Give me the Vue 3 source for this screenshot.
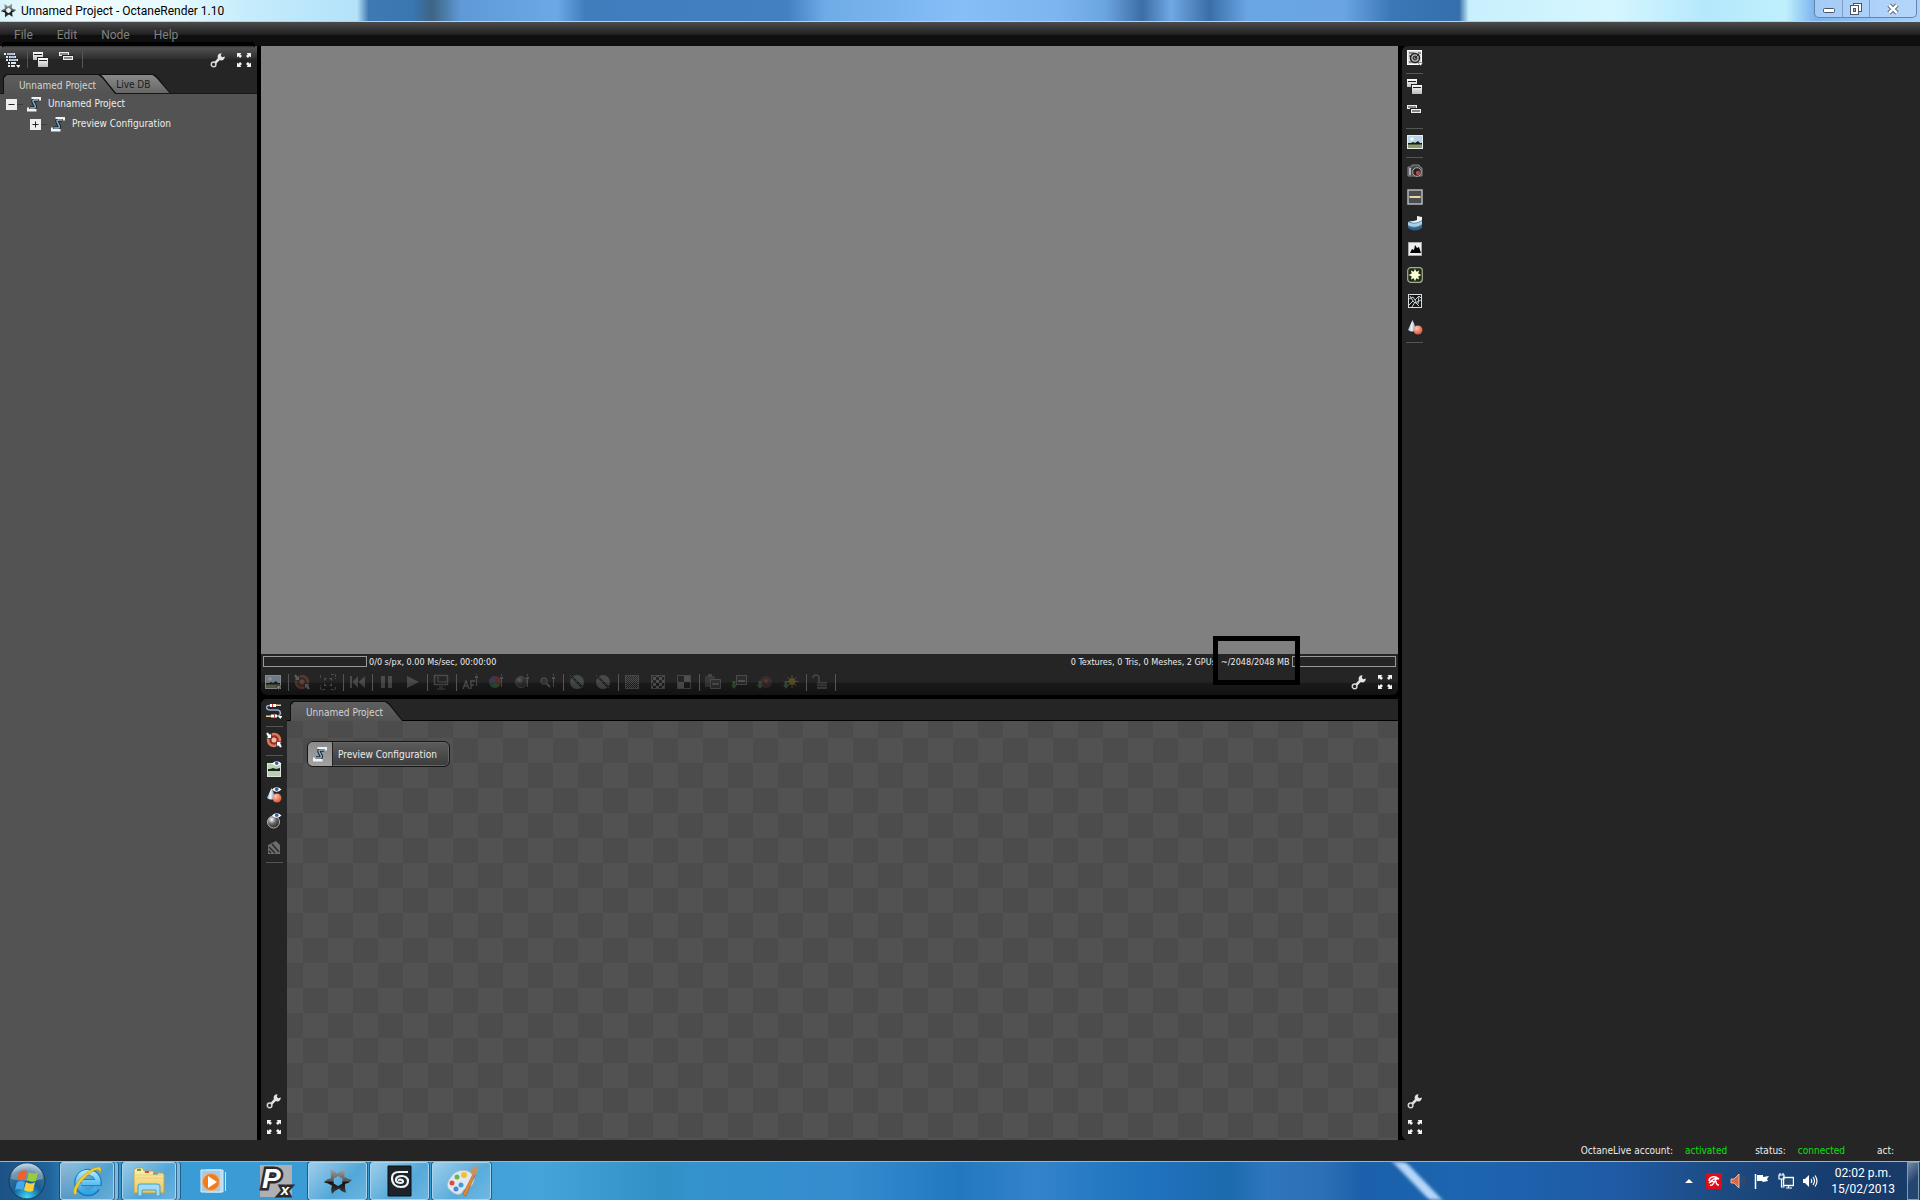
<script setup>
import { ref } from 'vue';

const menus = ['File', 'Edit', 'Node', 'Help'];

const treeTools = ['outline', '|', 'expand-items', 'collapse-items', '|'];

const renderTools = [
  'save-image', '|', 'recenter', 'fit', '|', 'restart', '|', 'pause', 'play', '|',
  'resolution', '|', 'autofocus', 'pick-white', 'pick-material', 'zoom-pick', '|',
  'sphere-a', 'sphere-b', '|', 'checks-fine', 'checks-mid', 'checks-large', '|',
  'clipboard', 'save-region', 'save-material', 'save-light', '|', 'lock', '|',
];

const graphTools = [
  'cable', '|', 'recenter', '|', 'image-eye', 'shapes-eye', 'sphere-eye', 'hatch', '|',
];

const inspectorTools = [
  'dial', '|', 'expand-items', 'collapse-items', '|', 'image', '|', 'camera', 'film',
  'environment', 'histogram', 'kernel', 'mesh', 'shapes', '|',
];

const windowTools = ['wrench', 'fullscreen'];

const tasks = [
  { id: 'ie', label: 'Internet Explorer', open: true, stacked: true },
  { id: 'explorer', label: 'Explorer', open: true, stacked: true },
  { id: 'wmp', label: 'Media Player' },
  { id: 'px', label: 'Px' },
  { id: 'octane', label: 'OctaneRender', open: true },
  { id: 'max', label: '3ds Max', open: true },
  { id: 'paint', label: 'Paint', open: true },
];

const tray = ['avira', 'speaker-red', 'flag', 'network', 'volume'];

const tab = ref('project');
const expanded = ref(true);
</script>

<template>
  <div class="desktop">
    <svg class="sprite" aria-hidden="true">
      <defs>
        <linearGradient id="silver" x1="0" y1="0" x2="0" y2="1">
          <stop offset="0" stop-color="#fff" />
          <stop offset="1" stop-color="#bbb" />
        </linearGradient>
        <linearGradient id="blade" x1="0" y1="0" x2="0" y2="1">
          <stop offset="0" stop-color="#b4b4b4" />
          <stop offset=".5" stop-color="#555" />
          <stop offset=".55" stop-color="#111" />
          <stop offset="1" stop-color="#444" />
        </linearGradient>
        <path id="wing" d="M14 9l4.300 2.500L20 9q1.500-3 0-8-3 4-8.500 6z" />
        <clipPath id="wings">
          <use href="#wing" />
          <use href="#wing" transform="rotate(60 14 14)" />
          <use href="#wing" transform="rotate(120 14 14)" />
          <use href="#wing" transform="rotate(180 14 14)" />
          <use href="#wing" transform="rotate(240 14 14)" />
          <use href="#wing" transform="rotate(300 14 14)" />
        </clipPath>
        <radialGradient id="ball" cx=".35" cy=".3" r=".8">
          <stop offset="0" stop-color="#fff" />
          <stop offset=".45" stop-color="#666" />
          <stop offset="1" stop-color="#1c1c1c" />
        </radialGradient>
        <radialGradient id="red-ball" cx=".35" cy=".3" r=".8">
          <stop offset="0" stop-color="#ffc8b0" />
          <stop offset="1" stop-color="#d8452a" />
        </radialGradient>
        <linearGradient id="cone" x1="0" y1="0" x2="1" y2="0">
          <stop offset="0" stop-color="#8fb4c8" />
          <stop offset=".4" stop-color="#eef6fa" />
          <stop offset="1" stop-color="#55707f" />
        </linearGradient>
        <radialGradient id="orb" cx=".5" cy=".95" r=".9">
          <stop offset="0" stop-color="#3fd8ff" />
          <stop offset=".45" stop-color="#155f94" />
          <stop offset=".8" stop-color="#3c6f94" />
          <stop offset="1" stop-color="#9dc0d4" />
        </radialGradient>
        <linearGradient id="ie-blue" x1="0" y1="0" x2="0" y2="1">
          <stop offset="0" stop-color="#a4e6ff" />
          <stop offset="1" stop-color="#2fa6e8" />
        </linearGradient>
        <linearGradient id="folder" x1="0" y1="0" x2="0" y2="1">
          <stop offset="0" stop-color="#fff0b0" />
          <stop offset="1" stop-color="#e8c860" />
        </linearGradient>
      </defs>

      <symbol id="outline" viewBox="0 0 16 16">
        <g fill="#dfe6f0">
          <path d="M0 1h2v2H0zM3 1h8v2H3zM2 4h2v2H2zM5 4h7v2H5zM2 7h2v2H2zM5 7h9v2H5zM4 10h2v2H4zM7 10h5v2H7zM4 13h2v2H4zM7 13h4v2H7z" />
        </g>
        <path d="M3 2h7M6 5h5M6 8h7" stroke="#7d95b8" stroke-width="1" />
        <path d="M12 13h4.500l-2.250 3z" fill="#fff" />
      </symbol>
      <symbol id="expand-items" viewBox="0 0 16 16">
        <rect x="0" y="0" width="10" height="8" fill="url(#silver)" />
        <path d="M1 2.500h8" stroke="#222" />
        <rect x="4" y="5" width="11" height="10" fill="#222" />
        <rect x="5" y="6" width="10" height="9" fill="url(#silver)" />
        <path d="M6 8.500h8" stroke="#222" />
      </symbol>
      <symbol id="collapse-items" viewBox="0 0 16 16">
        <rect x="0" y="0" width="10" height="4" fill="#eee" />
        <path d="M1 2h8" stroke="#222" />
        <rect x="3" y="3" width="11" height="5" fill="#222" />
        <rect x="4" y="4" width="10" height="4" fill="#eee" />
        <path d="M5 6h8" stroke="#222" />
      </symbol>
      <symbol id="wrench" viewBox="0 0 16 16">
        <path d="M5.200 10.800L10.500 5.500" stroke="#e4e4e4" stroke-width="2.600" />
        <path d="M14.800 4.500A3.600 3.600 0 1 1 11.500 1.200L10.800 3.800 12.200 5.200z" fill="#e4e4e4" />
        <circle cx="3.600" cy="12.400" r="2.300" fill="none" stroke="#d4d4d4" stroke-width="1.500" />
      </symbol>
      <symbol id="fullscreen" viewBox="0 0 16 16">
        <path
          fill="#f2f2f2"
          d="M1 1h4.500L4.200 2.300 6 4.100 4.100 6 2.300 4.200 1 5.500zM15 1v4.500l-1.300-1.300L11.900 6 10 4.100l1.800-1.800L10.500 1zM1 15v-4.500l1.300 1.300L4.100 10 6 11.900l-1.800 1.800L5.500 15zM15 15h-4.500l1.300-1.300L10 11.900l1.900-1.900 1.800 1.800 1.300-1.300z" />
      </symbol>
      <symbol id="node" viewBox="0 0 16 16">
        <path d="M12 4H8.500Q6 4 7.500 6.500l1.500 3Q10 12 8 12H4" fill="none" stroke="#1c2a34" stroke-width="3.600" />
        <path d="M12 4H8.500Q6 4 7.500 6.500l1.500 3Q10 12 8 12H4" fill="none" stroke="#8fb4c8" stroke-width="1.400" />
        <path d="M5.500 1H15v3.500h-2V3H5.500zM1 11.500h2V13h7.500v2.500H1z" fill="#f2f2f2" />
      </symbol>
      <symbol id="image" viewBox="0 0 16 16">
        <rect x=".5" y="1.500" width="15" height="13" fill="#b9d3e8" stroke="#e8ecef" />
        <path d="M1 9.500h14V14H1z" fill="#8c9a68" />
        <path d="M1 9h3l2-1 2 1 3-2 2 2h2v1.500H1z" fill="#162018" />
        <circle cx="5" cy="5" r="1.800" fill="#ffffe0" />
      </symbol>
      <symbol id="save-image" viewBox="0 0 16 16">
        <use href="#image" />
        <path d="M11 12h5l-2.500 4z" fill="#fff" stroke="#222" stroke-width=".5" />
      </symbol>
      <symbol id="recenter" viewBox="0 0 16 16">
        <circle cx="8" cy="8" r="6" fill="#8c3424" stroke="#e6745c" stroke-width="2.500" />
        <circle cx="8" cy="8" r="2.500" fill="#f4b4a4" />
        <path d="M0 1.500L1.500 0 4 2.500 5.500 1v5.500H0L1.500 5zM16 14.500L14.500 16 12 13.500 10.500 15V9.500H16L14.500 11z" fill="#fff" stroke="#222" stroke-width=".7" />
      </symbol>
      <symbol id="fit" viewBox="0 0 16 16">
        <path d="M11 .500h4.500V5M5 15.500H.500V11M11 15.500h4.500V12M.500 4V1" fill="none" stroke="#bbb" stroke-dasharray="3 1" />
        <path d="M4 4h3L4 7zM12 4v3L9 4zM4 12V9l3 3zM12 12H9l3-3z" fill="#ccc" />
      </symbol>
      <symbol id="restart" viewBox="0 0 16 16">
        <path d="M1 2h2v12H1zM9 2v12L3.500 8zM16 2v12L9.500 8z" fill="#bbb" />
      </symbol>
      <symbol id="pause" viewBox="0 0 16 16">
        <path d="M3 2h4v12H3zM10 2h4v12h-4z" fill="#bbb" />
      </symbol>
      <symbol id="play" viewBox="0 0 16 16">
        <path d="M3 2l12 6-12 6z" fill="#bbb" />
      </symbol>
      <symbol id="resolution" viewBox="0 0 16 16">
        <rect x="1.500" y="1.500" width="13" height="9" fill="none" stroke="#bbb" stroke-width="1.500" />
        <path d="M5 3v5h8M4 4l1-1 1 1M12 7l1 1-1 1M6 13h4M4 15h8" fill="none" stroke="#bbb" />
      </symbol>
      <symbol id="picker" viewBox="0 0 16 16">
        <path d="M12 3h3v2h-1v8h-1V5h-1zM13 0h1v2h-1z" fill="#ccc" />
      </symbol>
      <symbol id="autofocus" viewBox="0 0 16 16">
        <path d="M1 15l3-8 3 8M2 12h4M9 15V7h4M9 11h3" fill="none" stroke="#ccc" stroke-width="1.400" />
        <use href="#picker" x="1" y="-1" />
      </symbol>
      <symbol id="pick-white" viewBox="0 0 16 16">
        <path d="M7 8V2a6 6 0 0 0-5.200 9z" fill="#5a8ae0" />
        <path d="M7 8l-5.200 3A6 6 0 0 0 12.200 11z" fill="#50c060" />
        <path d="M7 8l5.200 3A6 6 0 0 0 7 2z" fill="#e05040" />
        <path d="M7 8V2a6 6 0 0 0-4 1.500z" fill="#c050c0" />
        <use href="#picker" />
      </symbol>
      <symbol id="pick-material" viewBox="0 0 16 16">
        <circle cx="7" cy="8" r="5.500" fill="url(#ball)" stroke="#aaa" />
        <use href="#picker" />
      </symbol>
      <symbol id="zoom-pick" viewBox="0 0 16 16">
        <circle cx="4" cy="7" r="3.200" fill="#666" stroke="#ccc" />
        <path d="M6.500 9.500L10 13" stroke="#ccc" stroke-width="2" />
        <use href="#picker" />
      </symbol>
      <symbol id="sphere-a" viewBox="0 0 16 16">
        <circle cx="8" cy="8" r="7" fill="#a4b8c4" />
        <path d="M1 1l14 14" stroke="#111" stroke-width="2" />
        <path d="M1 1l14 14" stroke="#ccc" stroke-dasharray="2 2" />
      </symbol>
      <symbol id="sphere-b" viewBox="0 0 16 16">
        <circle cx="8" cy="8" r="7" fill="#b4b4b4" />
        <path d="M1 1l14 14" stroke="#111" stroke-width="2" />
        <path d="M1 1l14 14" stroke="#ccc" stroke-dasharray="2 2" />
      </symbol>
      <pattern id="fine" width="2" height="2" patternUnits="userSpaceOnUse">
        <path d="M0 0h1v1H0zM1 1h1v1H1z" fill="#ccc" />
      </pattern>
      <pattern id="mid" width="6" height="6" patternUnits="userSpaceOnUse">
        <path d="M0 0h3v3H0zM3 3h3v3H3z" fill="#ccc" />
      </pattern>
      <symbol id="checks-fine" viewBox="0 0 16 16">
        <rect x="1.500" y="1.500" width="13" height="13" fill="url(#fine)" stroke="#aaa" />
      </symbol>
      <symbol id="checks-mid" viewBox="0 0 16 16">
        <rect x="1.500" y="1.500" width="13" height="13" fill="url(#mid)" stroke="#aaa" />
      </symbol>
      <symbol id="checks-large" viewBox="0 0 16 16">
        <rect x="1.500" y="1.500" width="13" height="13" fill="none" stroke="#aaa" />
        <path d="M8 2h6v6H8zM2 8h6v6H2z" fill="#ccc" />
      </symbol>
      <symbol id="clipboard" viewBox="0 0 16 16">
        <path d="M0 2h10v11H0z" fill="#777" />
        <path d="M3 0h4v3H3z" fill="#aaa" />
        <path d="M5.500 5.500h10v9h-10z" fill="#555" stroke="#bbb" />
        <path d="M7 10h7" stroke="#ccc" stroke-width="2" />
      </symbol>
      <symbol id="arrow-down" viewBox="0 0 16 16">
        <path d="M1.500 7h3v4H6l-3 4-3-4h1.500z" fill="#6fc86f" />
      </symbol>
      <symbol id="save-region" viewBox="0 0 16 16">
        <rect x="5.500" y="1.500" width="10" height="9" fill="#444" stroke="#bbb" />
        <path d="M7 7h7" stroke="#ccc" stroke-width="2" />
        <use href="#arrow-down" />
      </symbol>
      <symbol id="save-material" viewBox="0 0 16 16">
        <circle cx="9" cy="8" r="5" fill="#a03525" stroke="#556" stroke-width="2" />
        <circle cx="9" cy="7" r="2" fill="#d08060" />
        <use href="#arrow-down" />
      </symbol>
      <symbol id="save-light" viewBox="0 0 16 16">
        <path d="M9 1v13M2.500 7.500h13M4.500 3l9 9M13.500 3l-9 9" stroke="#d8c030" />
        <circle cx="9" cy="7.500" r="3.500" fill="#e8c838" />
        <use href="#arrow-down" />
      </symbol>
      <symbol id="lock" viewBox="0 0 16 16">
        <path d="M1 4c0-4 6-4 6 0v4" fill="none" stroke="#aaa" stroke-width="1.500" />
        <path d="M5 8h10v7H5z" fill="#999" />
        <path d="M5 10h10M5 12.500h10" stroke="#444" />
      </symbol>

      <symbol id="cable" viewBox="0 0 16 16">
        <path d="M5 2.500H3C-1 2.500 0 7 4 7h7c4 0 5 6 0 6" fill="none" stroke="#8fa9c8" stroke-width="1.600" />
        <path d="M4 1h6v3H4zM5 11.500h6v3H5z" fill="#fff" />
        <path d="M6 1h1v3H6zM8 11.500h1v3H8z" fill="#d33" />
        <path d="M10 1.500h5V3h-5zM0 12.500h5V14H0z" fill="#f1d49a" />
        <path d="M12 13h4.500l-2.250 3z" fill="#fff" />
      </symbol>
      <symbol id="eye" viewBox="0 0 16 16">
        <path d="M6 2.500q4.500-4.500 9.500 0-5 4.500-9.500 0z" fill="#fff" />
        <circle cx="10.700" cy="2.300" r="1.800" fill="#2f62a8" />
      </symbol>
      <symbol id="image-eye" viewBox="0 0 16 16">
        <rect x="1.500" y="2.500" width="13" height="13" fill="#b9d0b4" stroke="#dde5dd" />
        <path d="M2 8h2l3-1 3 1 4-1v3H2z" fill="#1b2418" />
        <use href="#eye" />
      </symbol>
      <symbol id="shapes" viewBox="0 0 16 16">
        <path d="M5.500 1l4.500 10q-5 3-9 0z" fill="url(#cone)" />
        <circle cx="11" cy="11" r="4.500" fill="url(#red-ball)" />
      </symbol>
      <symbol id="shapes-eye" viewBox="0 0 16 16">
        <use href="#shapes" />
        <use href="#eye" />
      </symbol>
      <symbol id="sphere-eye" viewBox="0 0 16 16">
        <circle cx="7.500" cy="9" r="6" fill="url(#ball)" stroke="#b4b4b4" />
        <use href="#eye" />
      </symbol>
      <symbol id="hatch" viewBox="0 0 16 16">
        <path d="M2 6l8-4 4 4v9H2z" fill="#6b6e70" />
        <path d="M3 8l6 6M3 12l2 2M6 5l7 8" stroke="#25282a" stroke-width="1.400" />
      </symbol>

      <symbol id="dial" viewBox="0 0 16 16">
        <rect x=".5" y=".5" width="14" height="14" fill="#ddd" stroke="#fff" />
        <path d="M2 3h3M2 6h2M2 12h3M11 3h3M6 2v2" stroke="#333" />
        <circle cx="8" cy="8" r="4.500" fill="#bbb" stroke="#222" stroke-width="1.500" />
        <circle cx="8" cy="8" r="2" fill="#777" stroke="#222" />
        <path d="M8 8l4-4" stroke="#222" />
        <path d="M11 12.500h5l-2.500 3.500z" fill="#fff" stroke="#222" stroke-width=".5" />
      </symbol>
      <symbol id="camera" viewBox="0 0 16 16">
        <path d="M1 4h3l1-2h7l1 2 2 1v8H1z" fill="#4b4b4b" stroke="#8a8a8a" />
        <path d="M2 5h2v7H2z" fill="#b0b0b0" />
        <circle cx="10" cy="9" r="4.300" fill="#222" stroke="#aaa" />
        <circle cx="11" cy="10" r="2.200" fill="#b54848" />
      </symbol>
      <symbol id="film" viewBox="0 0 16 16">
        <rect x="1" y="1" width="14" height="14" fill="#4a4d4f" stroke="#b4b9bc" stroke-width="1.500" />
        <path d="M2.500 8h11" stroke="#ecd89a" stroke-width="2" />
      </symbol>
      <symbol id="environment" viewBox="0 0 16 16">
        <path d="M1 7v5q7 5 14 0V4l-4-2v3Q6 8 1 7z" fill="#5b93ae" />
        <path d="M1 6q7 4 14-1V2l-5-1v4Q5 7 1 6z" fill="#eaf4fa" />
        <path d="M1 7q7 4 14-1v3q-7 5-14 1z" fill="#a9d0e4" />
        <path d="M1 11q7 4 14-1v3q-7 5-14 0z" fill="#325f86" />
      </symbol>
      <symbol id="histogram" viewBox="0 0 16 16">
        <rect x="1.500" y="1.500" width="13" height="13" fill="#eee" stroke="#aaa" />
        <path d="M3 12l2-4 2 1 1-5 2 3 2-1 1 3 1 3z" fill="#000" />
      </symbol>
      <symbol id="kernel" viewBox="0 0 16 16">
        <rect x=".7" y=".7" width="14.600" height="14.600" rx="3" fill="#202c14" stroke="#a8ae9c" stroke-width="1.200" />
        <path d="M8 1.800l1.300 3 2.900-1.400-1 3.100 3.200 1.500-3.200 1.500 1 3.100-2.900-1.400L8 14.200l-1.300-3-2.900 1.400 1-3.100L1.600 8l3.200-1.500-1-3.100 2.900 1.400z" fill="#f8ffd8" />
      </symbol>
      <symbol id="mesh" viewBox="0 0 16 16">
        <rect x="1.500" y="1.500" width="13" height="13" fill="#161616" stroke="#ddd" />
        <path d="M2 6l4-2 2 3 4-4 2 2M2 12l4-4 2 2 6-3M5 14l3-5 4 4M8 7l1 2M3 3l3 5M12 3l-1 8" fill="none" stroke="#c4ccd0" />
      </symbol>

      <symbol id="octane" viewBox="0 0 28 28">
        <rect width="28" height="28" fill="url(#blade)" clip-path="url(#wings)" />
      </symbol>
      <symbol id="ie" viewBox="0 0 32 32">
        <path d="M26 23a10.500 10.500 0 1 1 1.500-5.500H11" fill="none" stroke="#1b76b8" stroke-width="6.500" />
        <path d="M25.500 22.500a10 10 0 1 1 1.500-5H11" fill="none" stroke="url(#ie-blue)" stroke-width="5" />
        <path d="M4 30C-3 24 18 1 28 2c3 0 2 4 1 6 0-4-4-5-11 1C8 17 4 26 6 28z" fill="#f5cf2e" stroke="#c89010" stroke-width=".6" />
      </symbol>
      <symbol id="explorer" viewBox="0 0 32 32">
        <path d="M1 5l2-2h7l1 3h9l1 2h9l1 2v18H1z" fill="url(#folder)" stroke="#bfa050" />
        <path d="M4 4h4v2H4z" fill="#3fae49" />
        <path d="M12 6h4v2h-4z" fill="#d84a3a" />
        <path d="M20 8h5v2h-5z" fill="#4e9fe0" />
        <path d="M1 13h30M1 10h30" stroke="#e4cf80" />
        <path d="M5 31V21q0-2 2-2h17q3 0 3 2v10h-4v-6H9v6z" fill="#9fdcf6" stroke="#4b9cc4" />
      </symbol>
      <symbol id="wmp" viewBox="0 0 32 32">
        <path d="M8 5h17v22H8z" fill="#8ec5e8" stroke="#cfe9f8" />
        <path d="M24 6h1v21h-1zM27 7h1v19h-1z" fill="#c8e6f6" />
        <path d="M3 5h20v22H3z" fill="#a6cbe6" stroke="#e0f0fa" />
        <circle cx="13" cy="17" r="8.500" fill="#f07c1c" stroke="#f8b070" />
        <path d="M10 11l9 6-9 6z" fill="#fff" />
      </symbol>
      <symbol id="max" viewBox="0 0 32 32">
        <path d="M4 1h23v30H4z" fill="#1d2429" stroke="#0a0e12" />
        <path d="M24 7h-9c-5 0-7 3-7 6 0 6 4 9 9 9s7-3 7-6-3-5-6-5-6 1-6 4 3 3 5 3 3-2 1-3-3 0-4 0" fill="none" stroke="#eef3f5" stroke-width="2.200" />
      </symbol>
      <symbol id="paint" viewBox="0 0 32 32">
        <path d="M5 12C10 4 20 4 25 8c5 5 3 10 0 13-3 4-7 2-8 5-2 5-8 4-12 0-6-4-4-9 0-14z" fill="#dfe8f2" stroke="#a8bccb" />
        <circle cx="15" cy="20" r="2.500" fill="#3f9fd0" />
        <circle cx="6" cy="18" r="2.500" fill="#e04a38" />
        <circle cx="11" cy="12" r="2.500" fill="#62b84e" />
        <circle cx="18" cy="10" r="3" fill="#f0c030" />
        <circle cx="10" cy="24" r="2.500" fill="#4f86d8" />
        <path d="M27 9l2 1-9 21q-3 0-3-2z" fill="#e08a38" stroke="#a85c20" stroke-width=".6" />
        <path d="M24 6l6-6q3 3 1 8l-4 3z" fill="#c69464" />
      </symbol>
      <symbol id="start" viewBox="0 0 38 38">
        <circle cx="19" cy="19" r="18" fill="url(#orb)" stroke="#123c5c" />
        <path d="M3 17a16 16 0 0 1 32 0q-16 4-32 0z" fill="#fff" opacity=".28" />
        <path d="M11 10q4-3 8-1l-2 9q-4-2-8 0z" fill="#f0602c" />
        <path d="M21 10q5 3 9 0l-2 9q-5 2-9-1z" fill="#98cc3c" />
        <path d="M9 20q4-2 8 0l-2 8q-4-2-8 0z" fill="#46a8ec" />
        <path d="M18 20q5 3 9 0l-2 9q-4 2-9-1z" fill="#fcd03c" />
      </symbol>

      <symbol id="avira" viewBox="0 0 16 16">
        <rect width="16" height="16" rx="1" fill="#dc0c1c" />
        <path d="M3 8C3 4 8 2 13 6q-5-2-10 4 3-3 5-1M11 5L7 11q-1 2-3 1M10 8q0 4 3 4" fill="none" stroke="#fff" stroke-width="1.400" />
      </symbol>
      <symbol id="speaker-red" viewBox="0 0 16 16">
        <path d="M1 6h3l5-5v14l-5-5H1z" fill="#d96748" stroke="#ffcfb8" stroke-width=".8" />
        <path d="M11 5q2 3 0 6M13 3q3 5 0 10" fill="none" stroke="#3c4a5c" stroke-width="1.500" />
      </symbol>
      <symbol id="flag" viewBox="0 0 16 16">
        <path d="M1.500 1v15" stroke="#fff" stroke-width="1.500" />
        <path d="M3 2h6v2l6-1-2 3 1 2-5 1-1-1H3z" fill="#fff" />
      </symbol>
      <symbol id="network" viewBox="0 0 16 16">
        <rect x="5.500" y="4.500" width="10" height="8" fill="#28486c" stroke="#fff" stroke-width="1.400" />
        <path d="M8 15h6M10.500 13v2M1 2h5v4H1zM2 0v2M5 0v2M3.500 6v8h3" stroke="#fff" stroke-width="1.200" fill="none" />
      </symbol>
      <symbol id="volume" viewBox="0 0 16 16">
        <path d="M1 6h2l4-4v12l-4-4H1z" fill="#fff" />
        <path d="M9 6q1.500 2 0 4M11 4q3 4 0 8M13 2.500q4 5.500 0 11" fill="none" stroke="#fff" stroke-width="1.200" />
      </symbol>
    </svg>

    <header class="titlebar">
      <svg class="app-icon"><use href="#octane" /></svg>
      <h1 class="title">Unnamed Project - OctaneRender 1.10</h1>
      <div class="window-controls">
        <button type="button" aria-label="Minimize">
          <svg width="14" height="12"><rect x="1.500" y="5.500" width="11" height="4" rx="1" fill="#fff" stroke="#4a5568" /></svg>
        </button>
        <button type="button" aria-label="Restore">
          <svg width="14" height="12">
            <rect x="4.500" y=".5" width="8" height="8" fill="#fff" stroke="#4a5568" />
            <rect x="1.500" y="2.500" width="8" height="9" fill="#fff" stroke="#4a5568" />
            <rect x="4.500" y="5.500" width="2" height="3" fill="#9fb8d8" stroke="#4a5568" />
          </svg>
        </button>
        <button type="button" class="close" aria-label="Close">
          <svg width="14" height="12">
            <path d="M3 2l8 8M11 2l-8 8" stroke="#4a5568" stroke-width="4.500" />
            <path d="M3 2l8 8M11 2l-8 8" stroke="#fff" stroke-width="2.500" />
          </svg>
        </button>
      </div>
    </header>

    <nav class="menubar">
      <button v-for="menu in menus" :key="menu" type="button">{{ menu }}</button>
    </nav>

    <main class="workspace">
      <section class="outliner">
        <div class="toolbar toolbar--glossy">
          <template v-for="(tool, i) in treeTools" :key="i">
            <i v-if="tool === '|'" class="sep"></i>
            <button v-else type="button" class="tool" :aria-label="tool">
              <svg><use :href="'#' + tool" /></svg>
            </button>
          </template>
          <span class="spacer"></span>
          <button v-for="tool in windowTools" :key="tool" type="button" class="tool tool--window" :aria-label="tool">
            <svg><use :href="'#' + tool" /></svg>
          </button>
        </div>
        <div class="tabs" role="tablist">
          <button
            type="button"
            role="tab"
            :class="['tab', tab === 'project' && 'tab--active']"
            :aria-selected="tab === 'project'"
            @click="tab = 'project'">
            <span>Unnamed Project</span>
          </button>
          <button
            type="button"
            role="tab"
            :class="['tab', 'tab--next', tab === 'live' && 'tab--active']"
            :aria-selected="tab === 'live'"
            @click="tab = 'live'">
            <span>Live DB</span>
          </button>
        </div>
        <ul class="tree">
          <li>
            <div class="tree-row">
              <button type="button" class="toggle" aria-label="Toggle" @click="expanded = !expanded">
                <svg viewBox="0 0 11 11"><path d="M2.500 5.500h6" stroke="#222" /></svg>
              </button>
              <svg class="tree-icon"><use href="#node" /></svg>
              <span>Unnamed Project</span>
            </div>
            <ul v-if="expanded">
              <li class="tree-row">
                <button type="button" class="toggle" aria-label="Expand">
                  <svg viewBox="0 0 11 11"><path d="M2.500 5.500h6M5.500 2.500v6" stroke="#222" /></svg>
                </button>
                <svg class="tree-icon"><use href="#node" /></svg>
                <span>Preview Configuration</span>
              </li>
            </ul>
          </li>
        </ul>
      </section>

      <div class="center">
        <section class="viewport">
          <div class="render-area"></div>
          <div class="stats">
            <span class="meter"></span>
            <span>0/0 s/px, 0.00 Ms/sec, 00:00:00</span>
            <span class="spacer"></span>
            <span>0 Textures, 0 Tris, 0 Meshes, 2 GPUs, ~/2048/2048 MB</span>
            <span class="meter"></span>
            <span class="highlight"></span>
          </div>
          <div class="toolbar toolbar--render">
            <template v-for="(tool, i) in renderTools" :key="i">
              <i v-if="tool === '|'" class="sep"></i>
              <button v-else type="button" :class="['tool', 'tool--dim', i === 0 && 'tool--first']" :aria-label="tool">
                <svg><use :href="'#' + tool" /></svg>
              </button>
            </template>
            <span class="spacer"></span>
            <button v-for="tool in windowTools" :key="tool" type="button" class="tool tool--window" :aria-label="tool">
              <svg><use :href="'#' + tool" /></svg>
            </button>
          </div>
        </section>

        <section class="graph">
          <div class="toolbar toolbar--vertical">
            <template v-for="(tool, i) in graphTools" :key="i">
              <i v-if="tool === '|'" class="sep"></i>
              <button v-else type="button" class="tool" :aria-label="tool">
                <svg><use :href="'#' + tool" /></svg>
              </button>
            </template>
            <span class="spacer"></span>
            <button v-for="tool in windowTools" :key="tool" type="button" class="tool tool--window" :aria-label="tool">
              <svg><use :href="'#' + tool" /></svg>
            </button>
          </div>
          <div class="graph-main">
            <div class="tabs tabs--graph" role="tablist">
              <button type="button" role="tab" class="tab tab--active" aria-selected="true">
                <span>Unnamed Project</span>
              </button>
            </div>
            <div class="canvas">
              <button type="button" class="graph-node">
                <span class="graph-node-icon"><svg><use href="#node" /></svg></span>
                <span class="graph-node-label">Preview Configuration</span>
              </button>
            </div>
          </div>
        </section>
      </div>

      <section class="inspector">
        <div class="toolbar toolbar--vertical">
          <template v-for="(tool, i) in inspectorTools" :key="i">
            <i v-if="tool === '|'" class="sep"></i>
            <button v-else type="button" class="tool" :aria-label="tool">
              <svg><use :href="'#' + tool" /></svg>
            </button>
          </template>
          <span class="spacer"></span>
          <button v-for="tool in windowTools" :key="tool" type="button" class="tool tool--window" :aria-label="tool">
            <svg><use :href="'#' + tool" /></svg>
          </button>
        </div>
      </section>
    </main>

    <footer class="status">
      <span>OctaneLive account:</span>
      <span class="ok">activated</span>
      <span class="status-group">status:</span>
      <span class="ok">connected</span>
      <span class="status-last">act:</span>
    </footer>

    <div class="taskbar">
      <button type="button" class="start" aria-label="Start">
        <svg><use href="#start" /></svg>
      </button>
      <button
        v-for="task in tasks"
        :key="task.id"
        type="button"
        :class="['task', task.open && 'task--open', task.stacked && 'task--stacked']"
        :aria-label="task.label">
        <span v-if="task.id === 'px'" class="px">P<sub>x</sub></span>
        <svg v-else :class="task.id === 'octane' && 'task-icon--small'"><use :href="'#' + task.id" /></svg>
      </button>
      <span class="spacer"></span>
      <button type="button" class="tray-more" aria-label="Show hidden icons">
        <svg viewBox="0 0 8 4"><path d="M0 4l4-4 4 4z" fill="#fff" /></svg>
      </button>
      <div class="tray">
        <svg v-for="item in tray" :key="item"><use :href="'#' + item" /></svg>
      </div>
      <div class="clock">
        <span>02:02 p.m.</span>
        <span>15/02/2013</span>
      </div>
      <button type="button" class="show-desktop" aria-label="Show desktop"></button>
    </div>
  </div>
</template>

<style>
body {
  background: #000;
}
</style>

<style scoped>
.desktop {
  display: flex;
  flex-direction: column;
  min-height: 100vh;
  background: #252525;
  color: #ececec;
  font: 10px/14px 'DejaVu Sans Condensed', 'DejaVu Sans', sans-serif;
}

.sprite {
  position: absolute;
  width: 0;
  height: 0;
}

button {
  margin: 0;
  padding: 0;
  border: 0;
  background: none;
  color: inherit;
  font: inherit;
}

ul {
  margin: 0;
  padding: 0;
  list-style: none;
}

.spacer {
  flex: 1;
}

/* title bar */
.titlebar {
  display: flex;
  align-items: center;
  box-sizing: border-box;
  height: 22px;
  padding: 0 3px 0 1px;
  border-bottom: 1px solid #a9d2f4;
  background: linear-gradient(
    90deg,
    #d8f4fb 0%,
    #f0fcff 3%,
    #e6faff 9%,
    #c4ecfc 13%,
    #b4e2fa 18.600%,
    #3f79b2 19.200%,
    #3a76b2 21.500%,
    #3d6484 22.500%,
    #5f9ad6 24%,
    #6ca8e4 29%,
    #3f7dbd 30.500%,
    #4380c2 41%,
    #6fabe6 43%,
    #86bef8 50%,
    #7db5f0 55%,
    #6ca6e2 57.500%,
    #3c6ea6 59.500%,
    #6fa8e4 61%,
    #3a6ea8 63%,
    #6ba6e4 65%,
    #6aa4e2 70%,
    #3b76b6 72.500%,
    #3570ac 76%,
    #c8f0fc 76.500%,
    #d6f6ff 84%,
    #b4e8fc 89%,
    #c0f0fc 93%,
    #7cb4f0 94.500%,
    #a8d0fa 100%
  );
}

.app-icon {
  width: 15px;
  height: 15px;
  margin-right: 5px;
}

.title {
  flex: 1;
  margin: 0;
  color: #000;
  font: 12px/20px Roboto, sans-serif;
}

.window-controls {
  display: flex;
  align-self: flex-start;
  border: 1px solid #6484ac;
  border-top: 0;
  border-radius: 0 0 5px 5px;
  background: rgba(190, 218, 250, 0.6);
}

.window-controls button {
  width: 27px;
  height: 17px;
  line-height: 0;
}

.window-controls button + button {
  border-left: 1px solid #7f9cc2;
}

.window-controls .close {
  width: 47px;
}

/* menu */
.menubar {
  display: flex;
  gap: 24px;
  height: 24px;
  padding-left: 14px;
  background: linear-gradient(#4c4c4c, #1e1e1e 13px, #0f0f0f 13px);
  color: #808080;
  font: 12px/26px Roboto, sans-serif;
}

.workspace {
  display: flex;
  flex: 1;
  gap: 4px;
  background: #000;
}

/* toolbars */
.toolbar {
  display: flex;
  align-items: center;
}

.tool {
  width: 26px;
  height: 26px;
  line-height: 0;
}

.tool svg {
  display: block;
  width: 16px;
  height: 16px;
  margin: 0 4px;
}

.tool--window svg {
  margin: 0 5px;
}

.tool--dim {
  opacity: 0.25;
}

.tool--first {
  opacity: 0.5;
}

.sep {
  width: 1px;
  height: 17px;
  margin: 0 1px;
  background: #555;
}

.toolbar--vertical {
  flex-direction: column;
  width: 26px;
  border-radius: 6px 0 0 6px;
  background: #252525;
}

.toolbar--vertical .tool svg {
  margin: 0 5px;
}

.toolbar--vertical .tool:not(.tool--window) svg {
  margin-bottom: 2px;
}

.toolbar--vertical .sep {
  width: 17px;
  height: 1px;
  margin: 1px 0;
}

/* outliner */
.outliner {
  display: flex;
  flex-direction: column;
  width: 257px;
  background: #535353;
}

.toolbar--glossy {
  height: 27px;
  background: linear-gradient(#333, #505050 2px, #2d2d2d 13px, #252525 13px);
  border-radius: 6px 6px 0 0;
  box-shadow: 0 -6px 0 -2px #000;
}

.tabs {
  display: flex;
  align-items: flex-end;
  height: 20px;
  padding-left: 3px;
  border-bottom: 1px solid #161616;
  background: #252525;
}

.tab {
  position: relative;
  height: 19px;
  padding: 3px 20px 0 16px;
  background: #101010;
  clip-path: polygon(0 3px, 3px 0, calc(100% - 17px) 0, calc(100% - 13px) 3px, 100% 100%, 0 100%);
  color: #1c1c1c;
}

.tab::before {
  content: '';
  position: absolute;
  inset: 1px 1px 0;
  background: linear-gradient(#8a8a8a, #666);
  clip-path: inherit;
}

.tab span {
  position: relative;
}

.tab--next {
  margin-left: -16px;
  clip-path: polygon(0 0, calc(100% - 17px) 0, calc(100% - 13px) 3px, 100% 100%, 15px 100%);
}

.tab--active {
  z-index: 1;
  margin-bottom: -1px;
  height: 20px;
  color: #d4d4d4;
}

.tab--active::before {
  background: linear-gradient(#5e5e5e, #535353);
}

.tree-row {
  display: flex;
  align-items: center;
  height: 20px;
  padding-left: 6px;
}

.tree ul .tree-row {
  padding-left: 30px;
}

.toggle {
  width: 11px;
  height: 11px;
  background: #eee;
  line-height: 0;
}

.toggle svg {
  width: 11px;
  height: 11px;
}

.tree-icon {
  width: 16px;
  height: 16px;
  margin: 0 6px 0 0;
  padding-left: 9px;
  background: linear-gradient(#3c3c3c, #3c3c3c) 0 8px / 6px 1px no-repeat;
}

/* viewport */
.center {
  display: flex;
  flex: 1;
  flex-direction: column;
  gap: 4px;
  min-width: 0;
}

.viewport {
  display: flex;
  flex: 53 0 0;
  flex-direction: column;
}

.render-area {
  flex: 1;
  background: #808080;
}

.stats {
  position: relative;
  display: flex;
  align-items: center;
  gap: 2px;
  height: 15px;
  padding: 0 2px;
  background: #252525;
  font-size: 9px;
}

.meter {
  width: 102px;
  height: 9px;
  border: 1px solid #999;
}

.highlight {
  position: absolute;
  top: -18px;
  right: 98px;
  box-sizing: border-box;
  width: 87px;
  height: 49px;
  border: 5px solid #000;
}

.toolbar--render {
  height: 26px;
  border-radius: 0 0 6px 6px;
  background: linear-gradient(#252525 13px, #1a1a1a 14px, #121212);
}

/* node graph */
.graph {
  display: flex;
  flex: 36 0 0;
  background: #252525;
  border-radius: 6px 0 0 0;
}

.graph-main {
  display: flex;
  flex: 1;
  flex-direction: column;
}

.tabs--graph {
  height: 21px;
  border-bottom: 1px solid #000;
}

.canvas {
  flex: 1;
  padding: 20px;
  background: conic-gradient(#525252 25%, #4c4c4c 0 50%, #525252 0 75%, #4c4c4c 0) 16px 17px / 50px 50px;
}

.graph-node {
  display: flex;
  height: 26px;
  box-sizing: border-box;
  border: 1px solid #161616;
  border-radius: 6px;
  background: linear-gradient(#5c5c5c, #3c3c3c);
  box-shadow: inset 0 0 0 1px #666;
  overflow: hidden;
}

.graph-node-icon {
  padding: 4px;
  border-right: 1px solid #222;
  background: linear-gradient(#8c8c8c, #a2a2a2);
}

.graph-node-icon svg {
  display: block;
  width: 16px;
  height: 16px;
}

.graph-node-label {
  padding: 0 12px 0 5px;
  line-height: 25px;
}

/* inspector */
.inspector {
  display: flex;
  width: 27%;
  border-radius: 6px 0 0 6px;
  background: #252525;
}

/* status line */
.status {
  display: flex;
  align-items: center;
  justify-content: flex-end;
  gap: 12px;
  height: 21px;
  padding-right: 26px;
}

.ok {
  color: #0be00b;
}

.status-group {
  margin-left: 16px;
}

.status-last {
  margin-left: 20px;
}

/* taskbar */
.taskbar {
  position: relative;
  display: flex;
  box-sizing: border-box;
  height: 39px;
  border-top: 1px solid #8cb8da;
  background: linear-gradient(
    90deg,
    #1c5286 0%,
    #1f6299 2.500%,
    #348fc6 4%,
    #3a9cd6 10%,
    #3a9bd4 20%,
    #45a4da 28%,
    #3190c6 34.500%,
    #3492cc 36%,
    #358ccf 44%,
    #2278be 50%,
    #3383ca 54%,
    #2277c0 58%,
    #1f72bd 60%,
    #1c6aae 64%,
    #2e76be 66%,
    #2b70b6 69%,
    #1a60aa 71%,
    #1d65b0 76%,
    #1f5ba6 84%,
    #1c4a80 90%,
    #16396a 97%,
    #1a3c68 100%
  );
  overflow: hidden;
}

.taskbar::after {
  content: '';
  position: absolute;
  top: 0;
  bottom: 0;
  left: 73.500%;
  width: 13px;
  background: #b4d6f8;
  filter: blur(2px);
  transform: skewX(44deg);
}

.start {
  width: 54px;
  margin-right: 6px;
  line-height: 0;
}

.start svg {
  width: 38px;
  height: 38px;
}

.task {
  box-sizing: border-box;
  width: 59px;
  height: 38px;
  margin-right: 3px;
  border: 1px solid transparent;
  line-height: 0;
}

.task svg {
  width: 32px;
  height: 32px;
}

.task .task-icon--small {
  width: 28px;
  height: 28px;
}

.task--open {
  border: 1px solid #a8d4ee;
  border-radius: 3px;
  background: linear-gradient(135deg, rgba(255, 255, 255, 0.5), rgba(255, 255, 255, 0.12) 60%, rgba(255, 255, 255, 0.25));
  box-shadow: 0 0 0 1px rgba(10, 50, 90, 0.6);
}

.task--stacked {
  width: 54px;
  margin-right: 8px;
  box-shadow: 0 0 0 1px rgba(10, 50, 90, 0.6), 4px 0 0 0 #7db9de, 5px 0 0 0 #22608f;
}

.px {
  display: inline-block;
  width: 32px;
  height: 32px;
  background: #aeb0b4;
  color: #fff;
  font: italic bold 28px/28px 'Liberation Sans', sans-serif;
  -webkit-text-stroke: 5px #2a2a2e;
  paint-order: stroke fill;
}

.px sub {
  font-size: 15px;
  line-height: 0;
}

.tray-more {
  width: 24px;
  line-height: 0;
}

.tray-more svg {
  width: 8px;
  height: 4px;
}

.tray {
  display: flex;
  align-items: center;
  gap: 8px;
  padding: 0 9px 0 5px;
}

.tray svg {
  width: 16px;
  height: 16px;
}

.clock {
  display: flex;
  flex-direction: column;
  justify-content: center;
  padding: 0 12px 0 4px;
  color: #fff;
  font: 12px/16px Roboto, sans-serif;
  text-align: center;
}

.show-desktop {
  width: 12px;
  margin-right: 1px;
  border: 1px solid #7f9cb8;
  background: linear-gradient(135deg, rgba(255, 255, 255, 0.4), rgba(255, 255, 255, 0.05) 50%);
}
</style>
